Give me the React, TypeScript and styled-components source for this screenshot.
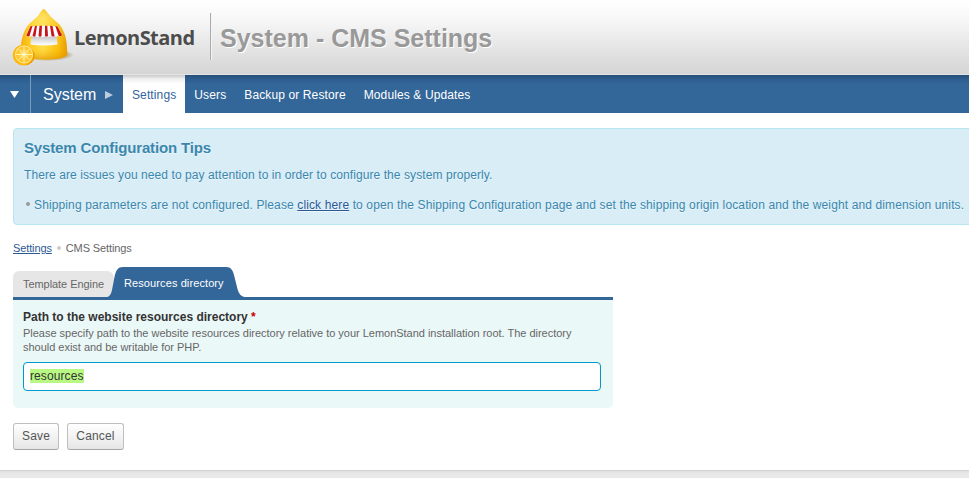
import React from "react";
import styled, { createGlobalStyle } from "styled-components";

const Global = createGlobalStyle`
  * { box-sizing: border-box; }
  body {
    margin: 0;
    background: #fff;
    font-family: "Liberation Sans", Arial, Helvetica, sans-serif;
    font-size: 12px;
    overflow: hidden;
  }
`;

const Page = styled.div`
  display: flex;
  flex-direction: column;
  height: 478px;
  width: 100%;
  overflow: hidden;
`;

const Header = styled.header`
  display: flex;
  height: 75px;
  flex: none;
  background: linear-gradient(#ffffff 0, #f7f7f7 20px, #d5d5d5 73px, #d5d5d5 100%);
  border-bottom: 1px solid #e4e4e4;
`;

const LogoMark = styled.svg`
  display: block;
  width: 64px;
  height: 64px;
  margin: 6px 0 0 10px;
`;

const Brand = styled.div`
  width: 137px;
  height: 47px;
  margin-top: 13px;
  border-right: 1px solid #aaa;
  box-shadow: 1px 0 0 #f5f5f5;
  font: bold 20px/50px "Open Sans", sans-serif;
  letter-spacing: -0.53px;
  color: #4c4c4c;
  white-space: nowrap;
`;

const PageTitle = styled.h1`
  margin: 0 0 0 9px;
  font-size: 25px;
  line-height: 77px;
  font-weight: bold;
  color: #999;
  text-shadow: 1px 1px 0 #fff;
  white-space: nowrap;
`;

const NavBar = styled.nav`
  display: flex;
  flex: none;
  height: 38px;
  background: linear-gradient(#264f78 0, #2d5d8e 4px, #336699 9px);
  color: #fff;
  line-height: 40px;
`;

const NavToggle = styled.div`
  width: 31px;
  border-right: 1px solid #7b9bbc;
  padding: 16px 0 0 10px;
  line-height: 0;
`;

const NavSection = styled.div`
  display: flex;
  width: 92px;
  padding-left: 12px;
  font-size: 16px;
  svg { margin: 16px 0 0 9px; }
`;

const NavItem = styled.a<{ $active?: boolean }>`
  padding: 0 9px;
  letter-spacing: 0.12px;
  color: ${(p) => (p.$active ? "#336699" : "#fff")};
  background: ${(p) => (p.$active ? "linear-gradient(#c9c9c9 0, #f0f0f0 4px, #fff 9px)" : "none")};
`;

const Tips = styled.section`
  flex: none;
  height: 97px;
  margin: 15px -10px 0 13px;
  padding: 0 10px;
  border: 1px solid #b8e6f0;
  border-radius: 4px;
  background: #d9edf7;
  color: #3a87ad;
  text-shadow: 0 1px 0 rgba(255, 255, 255, 0.5);
  white-space: nowrap;
`;

const TipsTitle = styled.h2`
  margin: 9px 0 0;
  font-size: 15px;
  line-height: 20px;
  letter-spacing: -0.14px;
`;

const TipsText = styled.p<{ $top: number; $spacing: number }>`
  display: flex;
  margin: ${(p) => p.$top}px 0 0;
  line-height: 16px;
  letter-spacing: ${(p) => p.$spacing}px;
  white-space: pre;
`;

const Bullet = styled.i<{ $color: string; $margin: string }>`
  flex: none;
  width: 4px;
  height: 4px;
  border-radius: 50%;
  margin: ${(p) => p.$margin};
  background: ${(p) => p.$color};
`;

const Link = styled.a`
  color: #2c5a94;
  text-decoration: underline;
`;

const Breadcrumb = styled.div`
  display: flex;
  flex: none;
  height: 14px;
  margin: 16px 0 0 13px;
  font-size: 11px;
  line-height: 14px;
  letter-spacing: -0.12px;
  color: #666;
`;

const Tabs = styled.div`
  display: flex;
  flex: none;
  align-items: flex-end;
  width: 600px;
  height: 33px;
  margin: 12px 0 0 13px;
  border-bottom: 3px solid #336699;
  font-size: 11px;
`;

const InactiveTab = styled.div`
  width: 101px;
  height: 26px;
  padding-left: 10px;
  border-radius: 6px 7px 0 0;
  background: #e6e6e6;
  color: #666;
  line-height: 27px;
  letter-spacing: -0.06px;
  white-space: nowrap;
`;

const ActiveTab = styled.div`
  position: relative;
  width: 139px;
  height: 30px;
  margin-left: -7px;
  padding-left: 17px;
  color: #fff;
  line-height: 33px;
  letter-spacing: 0.1px;
  white-space: nowrap;
  svg { position: absolute; left: 0; top: 0; }
  span { position: relative; }
`;

const Panel = styled.section`
  flex: none;
  width: 600px;
  height: 108px;
  margin-left: 13px;
  padding: 9px 12px 0 10px;
  border-radius: 0 0 5px 5px;
  background: #ebf8f8;
`;

const Label = styled.label`
  display: block;
  font-weight: bold;
  line-height: 16px;
  color: #333;
  em { color: #c00; font-style: normal; }
`;

const Hint = styled.p`
  margin: 1px 0 8px;
  font-size: 11px;
  line-height: 14px;
  letter-spacing: -0.02px;
  color: #666;
  white-space: nowrap;
  span { display: block; }
`;

const Field = styled.div`
  height: 29px;
  padding: 6px 6px 0;
  border: 1px solid #0099cc;
  border-radius: 4px;
  background: #fff;
  color: #333;
  line-height: 14px;
  letter-spacing: 0.1px;
  mark { display: inline-block; height: 14px; background: #b9f883; color: inherit; }
`;

const Actions = styled.div`
  display: flex;
  flex: none;
  gap: 8px;
  margin: 15px 0 0 13px;
`;

const Button = styled.button<{ $width: number }>`
  width: ${(p) => p.$width}px;
  height: 27px;
  padding: 0 0 1px;
  border: 1px solid #bfbfbf;
  border-bottom-color: #a6a6a6;
  border-radius: 3px;
  background: linear-gradient(#fff, #e6e6e6);
  font: 12px "Liberation Sans", Arial, sans-serif;
  letter-spacing: 0.15px;
  color: #555;
`;

const Footer = styled.footer`
  flex: none;
  height: 8px;
  margin-top: auto;
  border-top: 1px solid #d2d2d2;
  background: linear-gradient(#e0e0e0, #e9e9e9 3px);
`;

const dome =
  "M20.500 54C20.500 42 22.500 34 26.500 27.500C29.500 22 35 20 39 14.500C41 11.500 42.500 9 43.700 9C45 9 46.500 11.500 49 14.500C53 20 58.500 22 61.500 27.500C65.500 34 67.300 42 67.300 54.500C64 61.500 24 61.500 20.500 54Z";

const Logo = () => (
  <LogoMark viewBox="10 6 64 64">
    <defs>
      <linearGradient id="dome" x1="0" x2="1" y1="0" y2="0">
        <stop offset="0" stopColor="#f5a900" />
        <stop offset=".2" stopColor="#ffcf22" />
        <stop offset=".48" stopColor="#ffe04a" />
        <stop offset=".8" stopColor="#fbc20c" />
        <stop offset="1" stopColor="#e59b00" />
      </linearGradient>
      <linearGradient id="shade" x1="0" x2="0" y1="0" y2="1">
        <stop offset="0" stopColor="#f2b000" stopOpacity=".5" />
        <stop offset=".25" stopColor="#fff" stopOpacity=".1" />
        <stop offset=".8" stopColor="#f5a800" stopOpacity=".1" />
        <stop offset="1" stopColor="#db8500" stopOpacity=".6" />
      </linearGradient>
      <linearGradient id="inside" x1="0" x2="0" y1="0" y2="1">
        <stop offset="0" stopColor="#b9b9b9" />
        <stop offset="1" stopColor="#fff" />
      </linearGradient>
      <radialGradient id="ground">
        <stop offset="0" stopColor="#8b7022" stopOpacity=".8" />
        <stop offset=".7" stopColor="#8b7022" stopOpacity=".45" />
        <stop offset="1" stopColor="#8b7022" stopOpacity="0" />
      </radialGradient>
      <radialGradient id="slice">
        <stop offset="0" stopColor="#ffe77a" />
        <stop offset="1" stopColor="#ffbe1c" />
      </radialGradient>
    </defs>
    <ellipse cx="48" cy="55" rx="26" ry="6" fill="url(#ground)" />
    <path d={dome} fill="url(#dome)" />
    <path d={dome} fill="url(#shade)" />
    <path d="M31.500 34H56.500L57.500 44.500Q44 46.500 30.500 44.500Z" fill="url(#inside)" />
    <path d="M30.500 26.500Q44 25 57.500 26.500L62 35Q60.500 37.500 58.500 35.500Q56.500 37.500 54.500 35.700Q52.500 38 50 36Q47.500 38 45 36Q42.500 38 40 36Q37.500 38 35 36Q33 38 31 35.700Q28.500 38 26.500 35.500Z" fill="#fff" />
    <g fill="#c8141c">
      <path d="M30.500 26.300L32.500 26.100L29.500 36Q28 37 26.500 35.500Z" />
      <path d="M35 26L37 25.800L35.500 36Q34 37 32.500 36Z" />
      <path d="M39.500 25.700H42L41.500 36Q40 37.200 38.500 36Z" />
      <path d="M45 25.700H47.300L48 36Q46.500 37.200 45 36Z" />
      <path d="M50 25.800L52.500 26L54.500 36Q53 37.200 51.500 36Z" />
      <path d="M55.300 26.100L57.500 26.500L62 35Q60.500 37.200 58.500 35.500Z" />
    </g>
    <ellipse cx="25" cy="56" rx="9.600" ry="9.300" fill="#e79b00" />
    <circle cx="23" cy="55" r="10.300" fill="#ffb70c" />
    <circle cx="24" cy="54.500" r="9" fill="#fff0a8" />
    <circle cx="24" cy="54.500" r="8.100" fill="url(#slice)" />
    <path d="M24 46.400V62.600M16 54.500H32M18.300 48.800L29.700 60.200M29.700 48.800L18.300 60.200" stroke="#fff3b5" strokeWidth=".9" />
    <circle cx="24" cy="54.500" r="1.300" fill="#fff9d8" />
  </LogoMark>
);

export default function App() {
  return (
    <Page>
      <Global />
      <Header>
        <Logo />
        <Brand>LemonStand</Brand>
        <PageTitle>System - CMS Settings</PageTitle>
      </Header>
      <NavBar>
        <NavToggle>
          <svg width="9" height="7"><path d="M0 0H9L4.500 7Z" fill="#fff" /></svg>
        </NavToggle>
        <NavSection>
          System
          <svg width="8" height="8"><path d="M0 0L8 4L0 8Z" fill="#bccde0" /></svg>
        </NavSection>
        <NavItem $active>Settings</NavItem>
        <NavItem>Users</NavItem>
        <NavItem>Backup or Restore</NavItem>
        <NavItem>Modules &amp; Updates</NavItem>
      </NavBar>
      <Tips>
        <TipsTitle>System Configuration Tips</TipsTitle>
        <TipsText $top={9} $spacing={0.08}>There are issues you need to pay attention to in order to configure the system properly.</TipsText>
        <TipsText $top={14} $spacing={0.123}>
          <Bullet $color="#999" $margin="5px 4px 0 2px" />
          <span>Shipping parameters are not configured. Please <Link>click here</Link> to open the Shipping Configuration page and set the shipping origin location and the weight and dimension units.</span>
        </TipsText>
      </Tips>
      <Breadcrumb>
        <Link>Settings</Link>
        <Bullet $color="#ccc" $margin="5px 5px 0 5px" />
        <span>CMS Settings</span>
      </Breadcrumb>
      <Tabs>
        <InactiveTab>Template Engine</InactiveTab>
        <ActiveTab>
          <svg width="139" height="30">
            <path d="M0 30C3 29.500 4 27 5 23L7.500 10C9 3 11 0 16 0H119C124 0 126 3 127.500 10L130.500 22C132 27 134 29.500 138 30Z" fill="#336699" />
          </svg>
          <span>Resources directory</span>
        </ActiveTab>
      </Tabs>
      <Panel>
        <Label>Path to the website resources directory <em>*</em></Label>
        <Hint>
          <span>Please specify path to the website resources directory relative to your LemonStand installation root. The directory</span>
          <span>should exist and be writable for PHP.</span>
        </Hint>
        <Field><mark>resources</mark></Field>
      </Panel>
      <Actions>
        <Button $width={46}>Save</Button>
        <Button $width={57}>Cancel</Button>
      </Actions>
      <Footer />
    </Page>
  );
}
